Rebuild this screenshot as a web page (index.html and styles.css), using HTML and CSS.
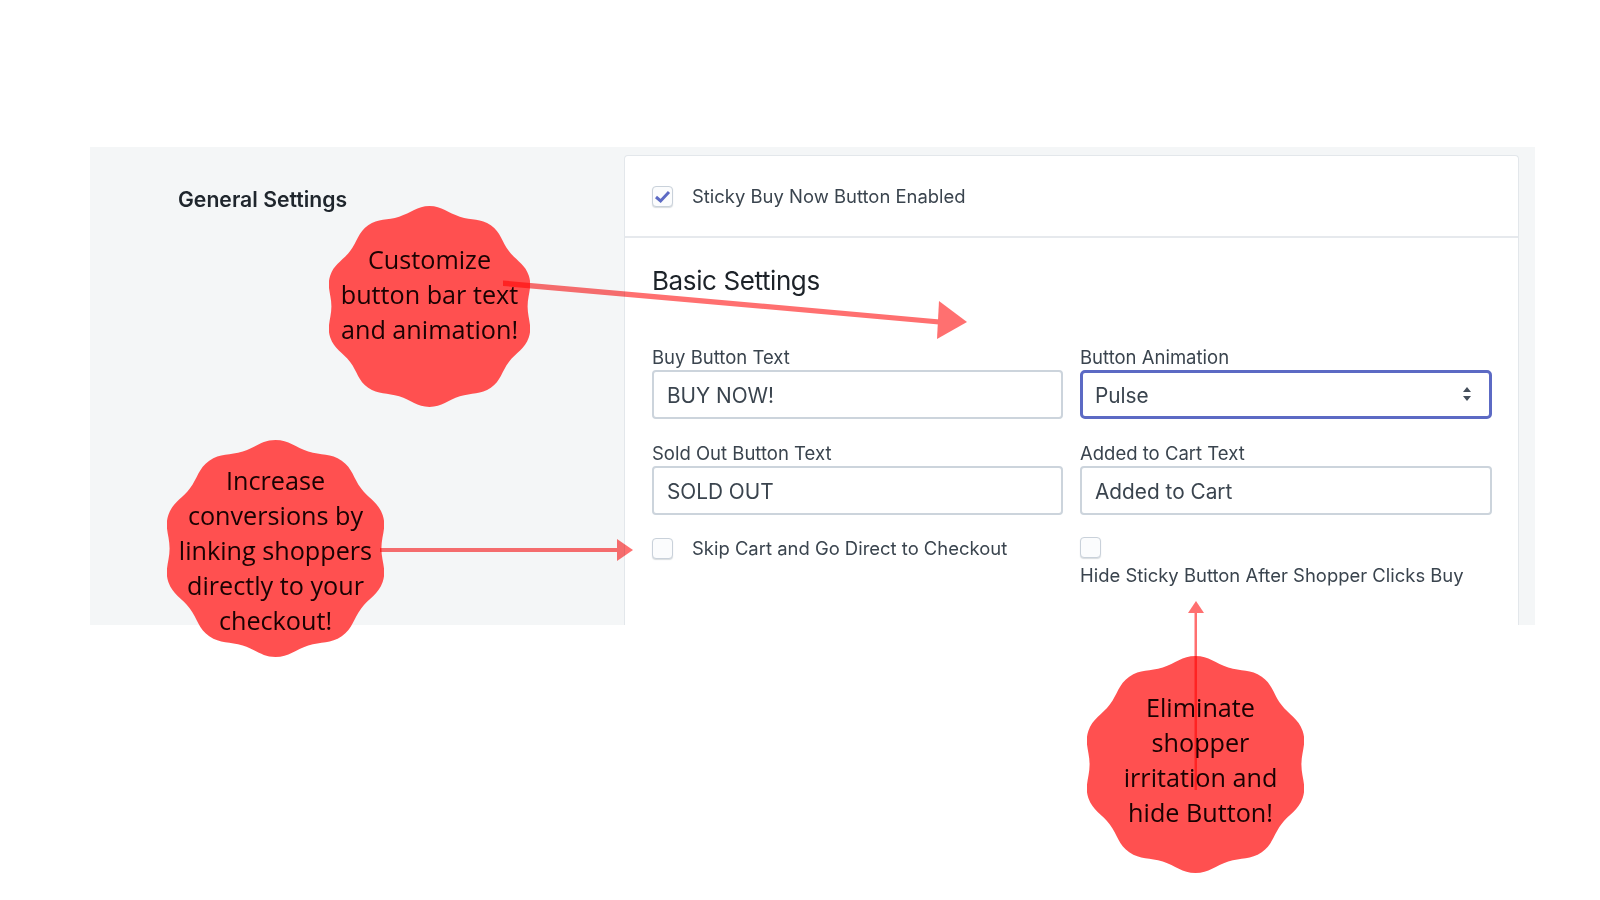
FILE: index.html
```html
<!DOCTYPE html>
<html lang="en">
<head>
    <meta charset="UTF-8">
    <meta name="viewport" content="width=device-width, initial-scale=1.0">
    <title>Sticky Buy Now Button Settings</title>
    <link rel="stylesheet" href="styles.css">
</head>
<body>
    <svg class="defs" width="0" height="0">
        <symbol id="scallop" viewBox="3.7 0 192.6 200" preserveAspectRatio="none">
            <path d="M100 0C112 0 117.64 6.89 129.05 10.6C140.46 14.31 149.07 12.04 158.78 19.1C168.49 26.16 168.99 35.04 176.05 44.75C183.11 54.46 191.4 57.69 195.11 69.1C198.82 80.51 194 88 194 100C194 112 198.82 119.49 195.11 130.9C191.4 142.31 183.11 145.54 176.05 155.25C168.99 164.96 168.49 173.84 158.78 180.9C149.07 187.96 140.46 185.69 129.05 189.4C117.64 193.11 112 200 100 200C88 200 82.36 193.11 70.95 189.4C59.54 185.69 50.93 187.96 41.22 180.9C31.51 173.84 31.01 164.96 23.95 155.25C16.89 145.54 8.6 142.31 4.89 130.9C1.18 119.49 6 112 6 100C6 88 1.18 80.51 4.89 69.1C8.6 57.69 16.89 54.46 23.95 44.75C31.01 35.04 31.51 26.16 41.22 19.1C50.93 12.04 59.54 14.31 70.95 10.6C82.36 6.89 88 0 100 0Z"/>
        </symbol>
    </svg>

    <div class="panel">
        <div class="sidebar">
            <h2>General Settings</h2>
        </div>
        <div class="card">
            <div class="card-head">
                <label class="check-row">
                    <span class="checkbox">
                        <svg viewBox="0 0 21 21" width="21" height="21"><path d="M4 11l4.6 4L17 6" fill="none" stroke="#5c6ac4" stroke-width="3"/></svg>
                    </span>
                    Sticky Buy Now Button Enabled
                </label>
            </div>
            <div class="card-body">
                <h3>Basic Settings</h3>
                <div class="form-grid">
                    <div class="field">
                        <label for="buyText">Buy Button Text</label>
                        <input type="text" id="buyText" value="BUY NOW!">
                    </div>
                    <div class="field">
                        <label for="animation">Button Animation</label>
                        <div class="select-wrap">
                            <select id="animation"><option>Pulse</option></select>
                            <svg class="select-arrows" viewBox="0 0 10 16" width="10" height="16"><path d="M5 1l4 5H1zM5 15l-4-5h8z" fill="#454f5b"/></svg>
                        </div>
                    </div>
                    <div class="field">
                        <label for="soldText">Sold Out Button Text</label>
                        <input type="text" id="soldText" value="SOLD OUT">
                    </div>
                    <div class="field">
                        <label for="addedText">Added to Cart Text</label>
                        <input type="text" id="addedText" value="Added to Cart">
                    </div>
                    <label class="check-row">
                        <span class="checkbox"></span>
                        Skip Cart and Go Direct to Checkout
                    </label>
                    <label class="check-stack">
                        <span class="checkbox"></span>
                        Hide Sticky Button After Shopper Clicks Buy
                    </label>
                </div>
            </div>
        </div>
    </div>

    <!-- annotations on top of the screenshot -->
    <div class="badge badge-animation">
        <svg><use href="#scallop"/></svg>
        <p>Customize<br>button bar text<br>and animation!</p>
    </div>
    <div class="badge badge-checkout">
        <svg><use href="#scallop"/></svg>
        <p>Increase<br>conversions by<br>linking shoppers<br>directly to your<br>checkout!</p>
    </div>
    <div class="badge badge-hide">
        <svg><use href="#scallop"/></svg>
        <p>Eliminate<br>shopper<br>irritation and<br>hide Button!</p>
    </div>

    <svg class="arrows" viewBox="0 0 1600 900" width="1600" height="900">
        <path d="M503 280.5L940 319.5L939 324.5L503 286Z"/>
        <path d="M939 301L967 322L937 339Z"/>
        <rect x="380" y="548" width="238" height="4"/>
        <path d="M617 539L633 550L617 561Z"/>
        <rect x="1194.5" y="612" width="2.5" height="178"/>
        <path d="M1196 601L1204 613H1188Z"/>
    </svg>
</body>
</html>
```

FILE: styles.css
```css
* { box-sizing: border-box; }
html, body { margin: 0; height: 100%; background: #fff; overflow: hidden; }
body { position: relative; padding: 147px 65px 0 90px; font-family: Inter, "Liberation Sans", sans-serif; color: #212b36; }
.defs { position: absolute; }

/* Settings screenshot */
.panel { display: flex; height: 478px; background: #f4f6f7; overflow: hidden; }
.sidebar { width: 534px; flex: none; padding: 39px 0 0 88px; }
.sidebar h2 { margin: 0; font-size: 21.2px; line-height: 26px; font-weight: 600; color: #1f262d; }
.card { flex: 1; margin: 8px 16px 0 0; background: #fff; border: 1px solid #e3e7eb; border-bottom: none; border-radius: 4px 4px 0 0; }
.card-head { height: 82px; display: flex; align-items: center; padding: 0 27px; border-bottom: 2px solid #e6e9ed; }
.card-body { padding: 26px 26px 0 27px; }
.card-body h3 { margin: 0 0 48px; font-size: 26px; line-height: 34px; font-weight: 400; letter-spacing: -0.4px; color: #1c2228; }

.form-grid { display: grid; grid-template-columns: 411px 412px; column-gap: 17px; row-gap: 23px; }
.field label { display: block; padding-bottom: 2px; font-size: 18.5px; line-height: 22px; color: #3a444e; }
.field input, .field select {
    display: block;
    width: 100%;
    height: 49px;
    padding: 2px 13px 0;
    font: inherit;
    font-size: 20.8px;
    color: #3a444e;
    background: #fff;
    border: 2px solid #ccd4dc;
    border-radius: 4px;
    outline: none;
    appearance: none;
}
.field select { padding: 2px 12px 0; border: 3px solid #5c6ac4; border-radius: 5px; }
.select-wrap { position: relative; }
.select-arrows { position: absolute; right: 20px; top: 16px; }

.check-row { display: flex; align-items: center; gap: 19px; font-size: 18.45px; line-height: 22px; color: #3a444e; }
.check-stack { display: flex; flex-direction: column; align-items: flex-start; gap: 6px; font-size: 18.45px; line-height: 22px; color: #3a444e; }
.form-grid .check-row { align-self: start; margin-top: -1px; }
.form-grid .check-stack { margin-top: -1px; }
.checkbox { display: block; width: 21px; height: 21px; flex: none; background: #fbfcfd; border: 1px solid #c9d1da; border-radius: 4px; box-shadow: 0 1px 1px rgba(99, 115, 129, 0.25); }
.checkbox svg { display: block; margin: -1px; }

/* Callouts */
.badge { position: absolute; display: flex; align-items: center; justify-content: center; }
.badge svg { position: absolute; left: 0; top: 0; width: 100%; height: 100%; fill: #ff5050; }
.badge p { position: relative; margin: 0; font-family: "Open Sans", "Liberation Sans", sans-serif; font-size: 25.2px; line-height: 35px; text-align: center; color: #1a0202; }
.badge-animation { left: 329px; top: 206px; width: 201px; height: 201px; padding-bottom: 24px; }
.badge-checkout { left: 167px; top: 440px; width: 217px; height: 217px; padding-top: 4px; }
.badge-hide { left: 1087px; top: 656px; width: 217px; height: 217px; padding-bottom: 10px; padding-left: 10px; }

.arrows { position: absolute; left: 0; top: 0; fill: #ff7070; mix-blend-mode: multiply; pointer-events: none; }
```
